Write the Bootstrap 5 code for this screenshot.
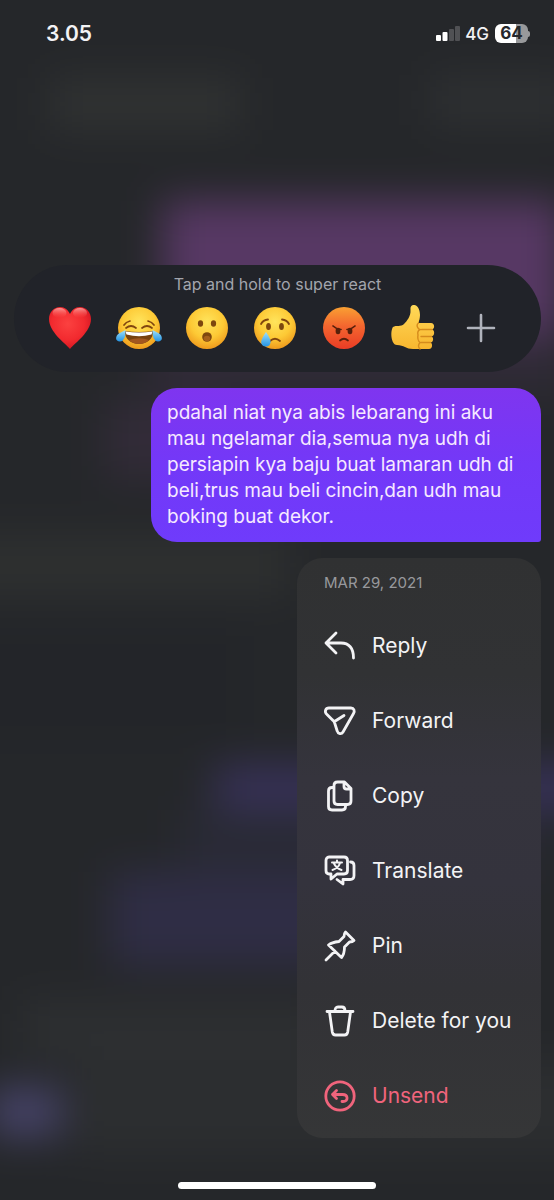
<!DOCTYPE html>
<html lang="id">
<head>
<meta charset="utf-8">
<meta name="viewport" content="width=device-width, initial-scale=1">
<title>Message actions</title>
<link href="https://cdn.jsdelivr.net/npm/bootstrap@5.3.0/dist/css/bootstrap.min.css" rel="stylesheet">
<style>
  body { background: #25272a; color: #f3f3f5; font-family: Inter, "Liberation Sans", sans-serif; }
  .screen { padding-bottom: 11px; overflow: hidden; }
  .backdrop { z-index: -1; }
  .status-bar { height: 67px; padding: 0 24px 0 46px; }
  .clock { font-size: 21px; line-height: 24px; font-weight: 600; }
  .network { font-size: 17px; line-height: 20px; font-weight: 500; margin-left: 5px; margin-right: 6px; }
  .battery { width: 33px; height: 19px; border-radius: 6px; color: #26282b; font-size: 17px; line-height: 19px; font-weight: 700;
    background: linear-gradient(90deg, #fff 64%, #98999b 64%); }
  .battery-tip { width: 2px; height: 6px; border-radius: 0 2px 2px 0; background: #98999b; }
  .overlay { margin-top: 198px; padding: 0 13px; gap: 16px; }
  .reactions { height: 107px; border-radius: 54px; background: #212329; padding: 9px 26px 0 22px; margin-left: 1px; }
  .hint { font-size: 16px; line-height: 20px; color: #a3a5ad; padding-left: 4px; }
  .react-btn { height: 44px; margin-top: 12px; }
  .react-btn svg, .action svg { display: block; overflow: visible; }
  .bubble { max-width: 390px; padding: 12px 16px; border-radius: 26px 26px 3px 26px; font-size: 19px; line-height: 26px;
    color: #f6e9ff; background: linear-gradient(#7f35ef, #7338f8 50%, #6f3bfb); }
  .menu { width: 244px; padding: 15px 0 5px; border-radius: 26px;
    background: linear-gradient(#303132, #313234 20%, #35343d 38%, #34333d 56%, #323236 74%, #353637); }
  .stamp { font-size: 15px; line-height: 20px; color: #98999d; padding-left: 27px; margin-bottom: 15px; }
  .action { height: 75px; padding: 0 0 0 27px; gap: 16px; font-size: 21px; line-height: 28px; color: #f3f3f5; }
  .action svg { stroke-width: 2.8px; }
  .action.danger { color: #f0647c; }
  .home-bar { width: 198px; height: 7px; border-radius: 4px; background: #fff; }
</style>
</head>
<body>
<div class="screen position-relative d-flex flex-column min-vh-100">
  <svg class="backdrop position-absolute top-0 start-0 w-100 h-100" viewBox="0 0 554 1200" preserveAspectRatio="none" aria-hidden="true">
    <defs>
      <filter id="soft" filterUnits="userSpaceOnUse" x="-120" y="-120" width="794" height="1440" color-interpolation-filters="sRGB"><feGaussianBlur stdDeviation="20"/></filter>
    </defs>
    <g filter="url(#soft)">
      <rect x="-120" y="-120" width="794" height="1440" fill="#25272a"/>
      <rect x="50" y="78" width="190" height="52" fill="#303232"/>
      <rect x="430" y="75" width="140" height="50" fill="#2e3032"/>
      <rect x="163" y="201" width="400" height="135" fill="#573864"/>
      <rect x="150" y="336" width="420" height="60" fill="#2f2a36"/>
      <rect x="105" y="400" width="120" height="80" fill="#322b38"/>
      <rect x="-60" y="535" width="350" height="60" fill="#2e3030"/>
      <rect x="-60" y="630" width="300" height="110" fill="#232529"/>
      <rect x="215" y="765" width="420" height="45" fill="#373158"/>
      <rect x="180" y="810" width="360" height="60" fill="#292a35"/>
      <rect x="110" y="872" width="300" height="94" fill="#2f2d45"/>
      <rect x="20" y="1000" width="300" height="60" fill="#2d2f31"/>
      <rect x="75" y="1060" width="560" height="95" fill="#2c2e30"/>
      <rect x="-10" y="1088" width="72" height="48" fill="#47446a"/>
    </g>
  </svg>

  <header class="status-bar d-flex align-items-center">
    <span class="clock me-auto">3.05</span>
    <svg width="24" height="17" viewBox="0 0 24 17" role="img" aria-label="Signal">
      <g fill="#fff"><rect x="0" y="10" width="5" height="6" rx="1"/><rect x="6.500" y="7" width="5" height="9" rx="1"/></g>
      <g fill="#505154"><rect x="13" y="4" width="5" height="12" rx="1"/><rect x="19" y="1" width="5" height="15" rx="1"/></g>
    </svg>
    <span class="network">4G</span>
    <span class="battery text-center">64</span><span class="battery-tip"></span>
  </header>

  <main class="overlay d-flex flex-column">
    <section class="reactions" aria-label="Reactions">
      <p class="hint text-center mb-0">Tap and hold to super react</p>
      <svg width="0" height="0" class="position-absolute" aria-hidden="true"><defs>
        <radialGradient id="face" cx=".5" cy=".35" r=".65"><stop offset="0" stop-color="#ffe45c"/><stop offset=".6" stop-color="#fdc935"/><stop offset="1" stop-color="#ee9a1d"/></radialGradient>
        <linearGradient id="rage" x2="0" y2="1"><stop offset="0" stop-color="#f9a033"/><stop offset=".45" stop-color="#f4662f"/><stop offset="1" stop-color="#e93c25"/></linearGradient>
        <radialGradient id="heart" cx=".45" cy=".4" r=".65"><stop offset="0" stop-color="#fb4140"/><stop offset=".6" stop-color="#f22a2f"/><stop offset="1" stop-color="#cf1420"/></radialGradient>
        <linearGradient id="gloss" x2="0" y2="1"><stop offset="0" stop-color="#ffc9c2" stop-opacity=".7"/><stop offset="1" stop-color="#ff5b55" stop-opacity="0"/></linearGradient>
        <linearGradient id="tear" x2="0" y2="1"><stop offset="0" stop-color="#9fe1fb"/><stop offset="1" stop-color="#2494e4"/></linearGradient>
        <linearGradient id="hand" x2="0" y2="1"><stop offset="0" stop-color="#ffd958"/><stop offset="1" stop-color="#f8b62f"/></linearGradient>
      </defs></svg>
      <div class="row row-cols-7 g-0 flex-nowrap">
        <div class="col"><button type="button" aria-label="Love" class="react-btn btn border-0 p-0 w-100 d-flex align-items-center justify-content-center">
          <svg width="42" height="42" viewBox="0 0 42 42"><path d="M21 42C16 36 0 25 0 12C0 5 5 0 11 0C16 0 19 3 21 7C23 3 26 0 31 0C37 0 42 5 42 12C42 25 26 36 21 42Z" fill="url(#heart)"/><ellipse cx="10.500" cy="6" rx="7" ry="5" fill="url(#gloss)"/><ellipse cx="31" cy="6" rx="7" ry="5" fill="url(#gloss)"/></svg>
        </button></div>
        <div class="col"><button type="button" aria-label="Haha" class="react-btn btn border-0 p-0 w-100 d-flex align-items-center justify-content-center">
          <svg width="42" height="42" viewBox="0 0 42 42"><circle cx="21" cy="21" r="21" fill="url(#face)"/><g fill="none" stroke="#80450f" stroke-width="1.700" stroke-linecap="round"><path d="M6 18Q8 15 12 14M36 18Q34 15 30 14M8 21Q13 17 18 21M24 21Q29 17 34 21"/></g><path d="M6.500 24Q21 26 35.500 24C35 32 29 37 21 37S7 32 6.500 24Z" fill="#77420f"/><path d="M7.500 24.400Q21 26.500 34.500 24.400L33.500 27.500Q21 31 8.500 27.500Z" fill="#fff"/><path d="M11 33Q21 29.500 31 33Q27 37 21 37T11 33Z" fill="#a3571f"/><path d="M7.500 23Q8 34 2 34.500C-3 34.500-3 29 1 26.500Q5 24 7.500 23ZM34.500 23Q34 34 40 34.500C45 34.500 45 29 41 26.500Q37 24 34.500 23Z" fill="url(#tear)"/></svg>
        </button></div>
        <div class="col"><button type="button" aria-label="Wow" class="react-btn btn border-0 p-0 w-100 d-flex align-items-center justify-content-center">
          <svg width="42" height="42" viewBox="0 0 42 42"><circle cx="21" cy="21" r="21" fill="url(#face)"/><g fill="#7d470e"><ellipse cx="14.500" cy="16.500" rx="2.600" ry="3.300"/><ellipse cx="27.500" cy="16.500" rx="2.600" ry="3.300"/><circle cx="21" cy="30" r="4.800"/></g><ellipse cx="21" cy="31.500" rx="3.300" ry="2.800" fill="#a4601b"/></svg>
        </button></div>
        <div class="col"><button type="button" aria-label="Sad" class="react-btn btn border-0 p-0 w-100 d-flex align-items-center justify-content-center">
          <svg width="42" height="42" viewBox="0 0 42 42"><circle cx="21" cy="21" r="21" fill="url(#face)"/><g fill="#7d470e"><ellipse cx="14.500" cy="19.500" rx="2.400" ry="3.500"/><ellipse cx="27.500" cy="19.500" rx="2.400" ry="3.500"/></g><path d="M7 17Q9 13 14 12.500M35 17Q33 13 28 12.500M16 34Q21 29.500 26 34" fill="none" stroke="#80450f" stroke-width="1.800" stroke-linecap="round"/><path d="M12 25Q17 32 16.500 35.500A4.700 4.700 0 0 1 7.200 35.500Q7 32 12 25Z" fill="url(#tear)"/></svg>
        </button></div>
        <div class="col"><button type="button" aria-label="Angry" class="react-btn btn border-0 p-0 w-100 d-flex align-items-center justify-content-center">
          <svg width="42" height="42" viewBox="0 0 42 42"><circle cx="21" cy="21" r="21" fill="url(#rage)"/><g fill="#57200b"><ellipse cx="15" cy="24" rx="2.400" ry="3.300"/><ellipse cx="27" cy="24" rx="2.400" ry="3.300"/></g><path d="M10 19Q13 22 18 22.500M32 19Q29 22 24 22.500M17 33.500Q21 30 25 33.500" fill="none" stroke="#57200b" stroke-width="1.700" stroke-linecap="round"/></svg>
        </button></div>
        <div class="col"><button type="button" aria-label="Like" class="react-btn btn border-0 p-0 w-100 d-flex align-items-center justify-content-center">
          <svg width="42" height="42" viewBox="-1 0 42 42"><path d="M1 20C4 18 9 20 12 17C15 14 19 9 18.500 3C18 -1 20 -2.500 22.500 -2C27 -1 28 5 28 8C28 11 27 14 26.500 16H39C43 16 43 22 40 22.500C43 23 43 29 39.500 29.500C42 30.500 41.500 35.500 38.500 35.500C41 36.500 40.500 42 37 42H21C14 42 12 38 5 38C-1 38 -2 24 1 20Z" fill="url(#hand)"/><path d="M26.500 16Q24 18 26 21Q27 23 30 22.500H40M39.500 29.500H29M38.500 35.500H29M28 22.500Q25 24 26 28Q25 33 28 35.500Q25 39 28 42" fill="none" stroke="#d58b1c" stroke-width="1.400" stroke-linecap="round"/></svg>
        </button></div>
        <div class="col"><button type="button" aria-label="More reactions" class="react-btn btn border-0 p-0 w-100 d-flex align-items-center justify-content-center">
          <svg width="28" height="28" viewBox="0 0 28 28"><path d="M14 1V27M1 14H27" stroke="#b0b3bc" stroke-width="2.600" stroke-linecap="round"/></svg>
        </button></div>
      </div>
    </section>

    <p class="bubble ms-auto mb-0">pdahal niat nya abis lebarang ini aku mau ngelamar dia,semua nya udh di persiapin kya baju buat lamaran udh di beli,trus mau beli cincin,dan udh mau boking buat dekor.</p>

    <section class="menu ms-auto d-flex flex-column" aria-label="Message actions">
      <p class="stamp">MAR 29, 2021</p>
      <button type="button" class="action btn border-0 d-flex align-items-center text-start">
        <svg width="32" height="32" viewBox="0 0 32 32" fill="none" stroke="currentColor" stroke-linecap="round" stroke-linejoin="round"><path d="M12 3L2 13L12 23M2 13H17C25 13 29.500 18 29.500 28"/></svg>Reply</button>
      <button type="button" class="action btn border-0 d-flex align-items-center text-start">
        <svg width="32" height="32" viewBox="0 0 32 32" fill="none" stroke="currentColor" stroke-linecap="round" stroke-linejoin="round"><path d="M5 3H27C30 3 31 6 29.500 8.500L19 27C17.500 29.700 14 29 13.200 26L10.500 17.500Q10 16 8.500 15L3 9.500C0 7 1.500 3 5 3ZM10.500 16.500L20 10.500"/></svg>Forward</button>
      <button type="button" class="action btn border-0 d-flex align-items-center text-start">
        <svg width="32" height="32" viewBox="0 0 32 32" fill="none" stroke="currentColor" stroke-linecap="round" stroke-linejoin="round"><path d="M13.500 2H20.500L27 8.500V21C27 23 26 24.500 23.500 24.500H13.500C11 24.500 10 23 10 21V5.500C10 3 11 2 13.500 2ZM20 3V6.500Q20 9 22.500 9H26M9.500 7.500H8C5.500 7.500 4.500 9 4.500 11V26.500C4.500 29 5.500 30 8 30H18C20.500 30 21.500 28.500 21.500 26.500V25"/></svg>Copy</button>
      <button type="button" class="action btn border-0 d-flex align-items-center text-start">
        <svg width="32" height="32" viewBox="0 0 32 32" fill="none" stroke="currentColor" stroke-linecap="round" stroke-linejoin="round"><path d="M5 2H20C22.500 2 23.500 3.500 23.500 5.500V15.500C23.500 18 22.500 19 20 19H13L7 24V19H5C3 19 2 18 2 15.500V5.500C2 3.500 3 2 5 2ZM26.500 7C28.500 7 30 8 30 10.500V20.500C30 23 28.500 24.500 26 24.500H19V29L13 24.500"/><path d="M8 7.500H18M13 5.500V7.500M16 8Q14.500 13 8.500 15M10 8.500Q12 13 17.500 15" stroke-width="2"/></svg>Translate</button>
      <button type="button" class="action btn border-0 d-flex align-items-center text-start">
        <svg width="32" height="32" viewBox="0 0 32 32" fill="none" stroke="currentColor" stroke-linecap="round" stroke-linejoin="round"><path d="M2 30L11 21M21.500 2L30 10.500C28.500 12 26.500 12 25.500 12L20.500 17C20.500 21 20 24.500 17.500 27.500L4.500 15C7.500 12.500 11 12 15 11.500L20 6.500C20 5 20 3.500 21.500 2Z"/></svg>Pin</button>
      <button type="button" class="action btn border-0 d-flex align-items-center text-start">
        <svg width="32" height="32" viewBox="0 0 32 32" fill="none" stroke="currentColor" stroke-linecap="round" stroke-linejoin="round"><path d="M3 6.500H29M11 6Q11 2 14 2H18Q21 2 21 6M5.500 7L8.300 27Q8.800 30 11.500 30H20.500Q23.200 30 23.700 27L26.500 7"/></svg>Delete for you</button>
      <button type="button" class="action danger btn border-0 d-flex align-items-center text-start">
        <svg width="32" height="32" viewBox="0 0 32 32" fill="none" stroke="currentColor" stroke-linecap="round" stroke-linejoin="round"><circle cx="16" cy="16" r="14.200"/><path d="M12.500 10.500L8.500 14.500L12.500 18.500M8.500 14.500H18.500C24.500 14.500 24.500 21.500 19 21.500H18"/></svg>Unsend</button>
    </section>
  </main>

  <footer class="mt-auto d-flex justify-content-center"><span class="home-bar"></span></footer>
</div>
<script src="https://cdn.jsdelivr.net/npm/bootstrap@5.3.0/dist/js/bootstrap.bundle.min.js"></script>
</body>
</html>
